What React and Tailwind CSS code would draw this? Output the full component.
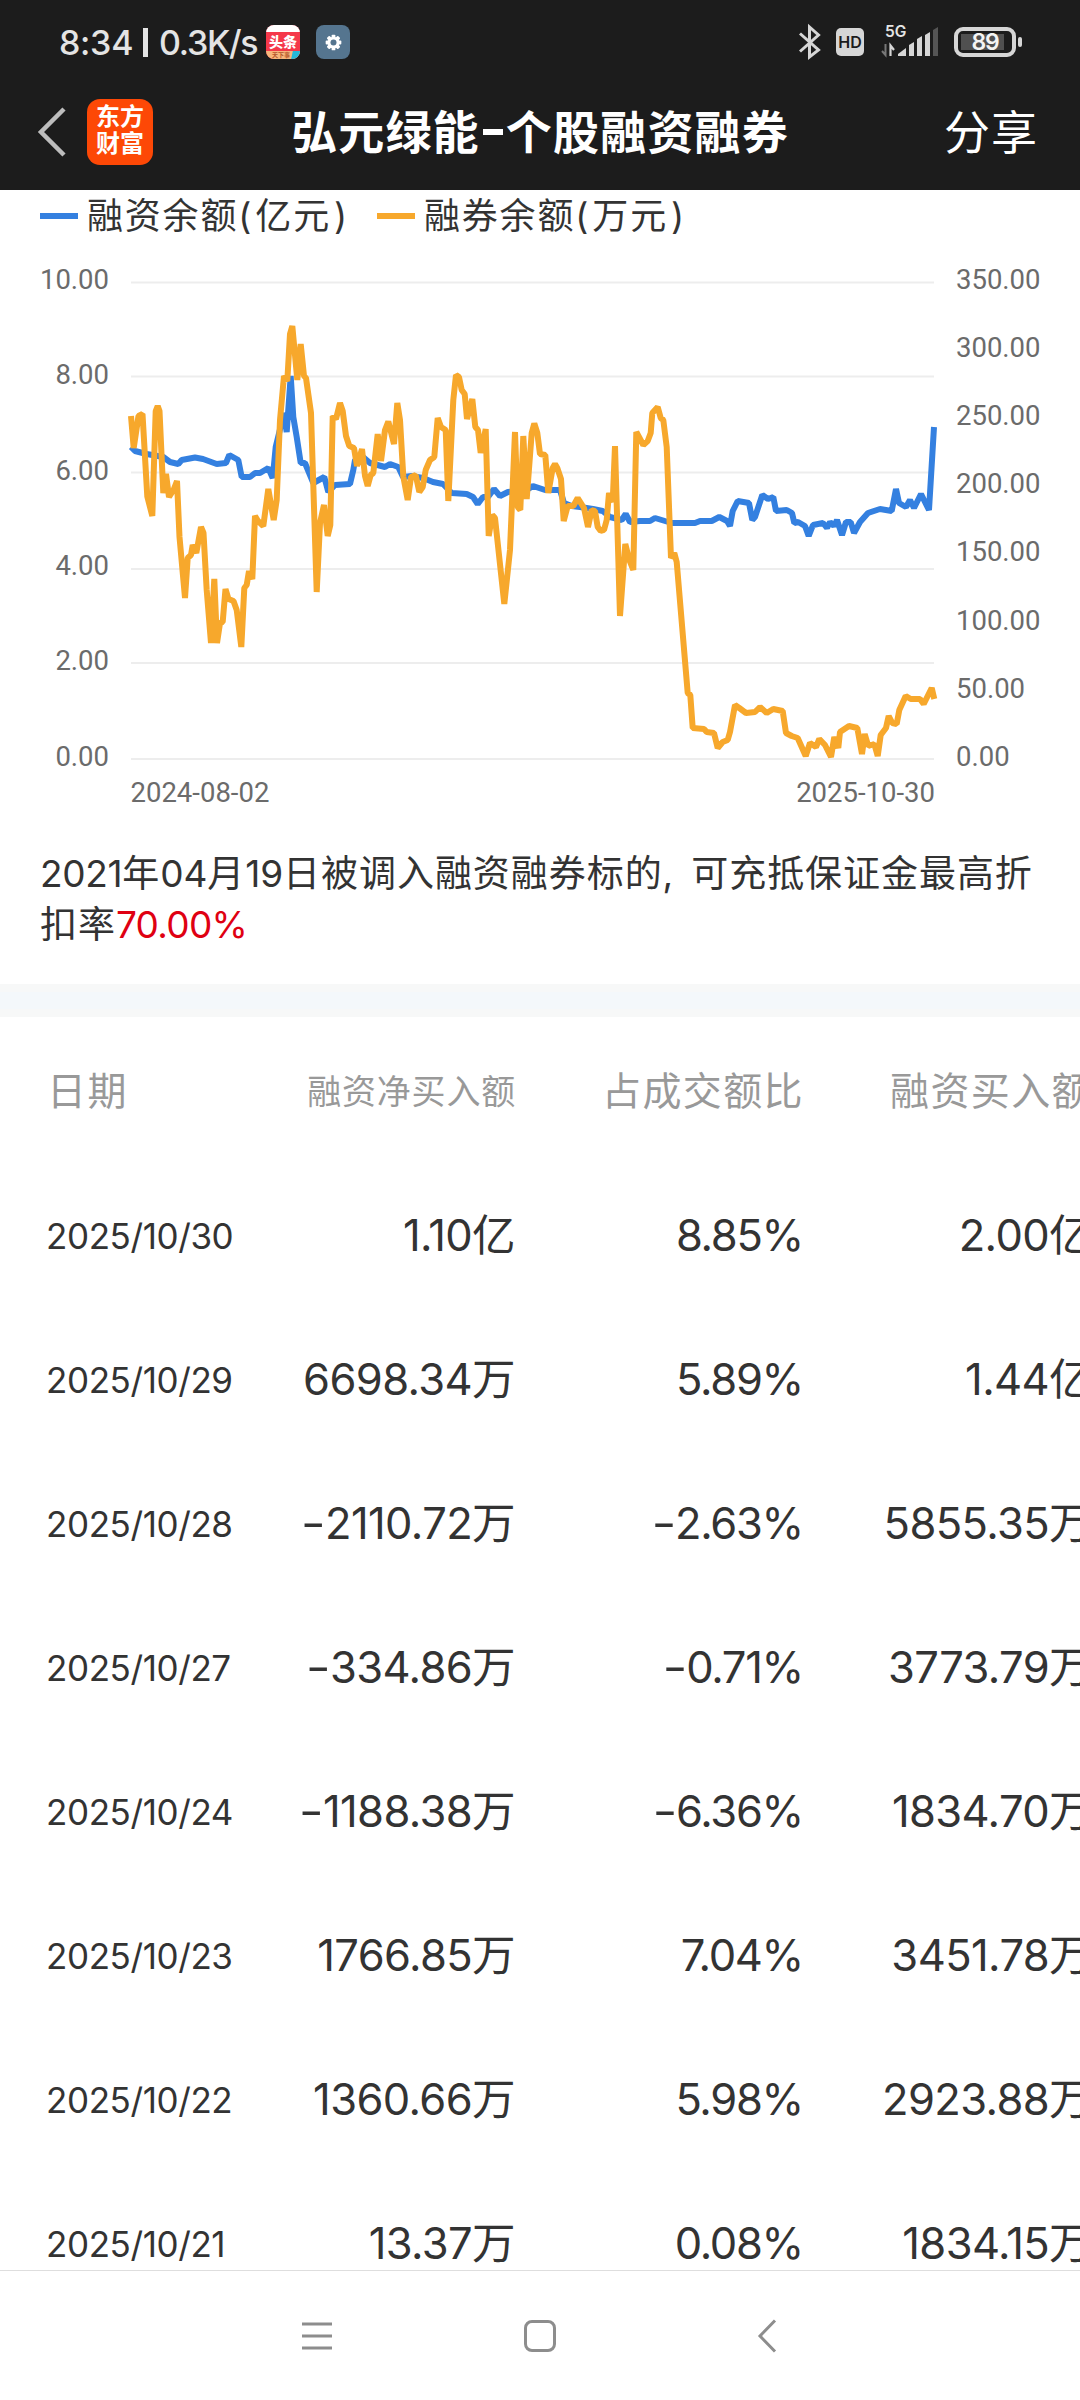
const rows = [
  { date: '2025/10/30', net: '1.10亿', ratio: '8.85%', buy: '2.00亿' },
  { date: '2025/10/29', net: '6698.34万', ratio: '5.89%', buy: '1.44亿' },
  { date: '2025/10/28', net: '-2110.72万', ratio: '-2.63%', buy: '5855.35万' },
  { date: '2025/10/27', net: '-334.86万', ratio: '-0.71%', buy: '3773.79万' },
  { date: '2025/10/24', net: '-1188.38万', ratio: '-6.36%', buy: '1834.70万' },
  { date: '2025/10/23', net: '1766.85万', ratio: '7.04%', buy: '3451.78万' },
  { date: '2025/10/22', net: '1360.66万', ratio: '5.98%', buy: '2923.88万' },
  { date: '2025/10/21', net: '13.37万', ratio: '0.08%', buy: '1834.15万' },
];

const gridLines = [282.5, 376.5, 472.5, 569, 663, 759];
const leftTicks = ['10.00', '8.00', '6.00', '4.00', '2.00', '0.00'];
const rightTicks = ['350.00', '300.00', '250.00', '200.00', '150.00', '100.00', '50.00', '0.00'];

const marginLine = `131,447 135,451 146.7,454 163.3,457 170,462 178.3,464 181.7,460 195,457.5 203,459 216.7,464 226,463
  229.3,455 238.3,460 241.7,477 250,477 255,473 260,473 268.3,468 272.7,478 275.7,447 284,413 286.7,432 290.7,376
  293.3,417 296.7,437 300.7,463 305,463 313.3,483 324.3,477 328.3,492 335,485 350,484 353.3,470 355,460 363,457
  370,463 385,467 390,464 398.3,467 403,477 411.7,476 423,478 433,482 443,484 451.7,493 466.7,494 473,497
  477.7,504 483,497 488,497 494,489 500,496 508,492 526.7,490 533,486 545,490 560,490 564,503 571.7,506 580,507
  593,509 602.7,511 610,517 621.7,520 625.7,514 630,522 640,521 650,521 655,518 665,521 671.7,523 695,523
  700,521 711.7,521 719.3,517 727,521 730,526 732.7,511 737.7,501 749,503 752.3,520 755,517 762.3,495 768,499
  773.3,497 776,511 786.7,510 792,513 794.3,523 798,522 805,526 808.7,536 813,525 823,523 827,528 830,522
  834,526 837,520 842,535 846,522 850.7,522 854,533 860,522 868,513 880,509 891.7,511 896,489 899,503 906,507
  910,500 914,508 921,494 929,510 934,427`;

const shortLine = `131,416 133.7,448 138.5,416 142.5,414 147.3,496.5 152.3,516 155.7,411 157.7,406 159.5,411 163.3,493
  166,474 169,497 173.5,490 177,481 179.5,537 185,598 187.7,558 191,555 192.7,545 196.3,553 201,527 203.5,533
  206.7,590 211,643 214.3,579 217,643 220,623 222.7,622 225.5,589 228.5,599 233.5,601 236.7,610 241.3,647
  244.3,588 246.7,585 249,571 252.3,579 255,516 258,521 263.3,526 268.3,489 273.7,520 276.7,500 280,420 284,376
  287.3,381 290,334 292.3,326 297.3,380 300.7,344 304,376 306,378 311,413 316.7,592 320,523 324,505 327.7,536
  330.3,525 332.7,416 336,419 340,403 342.7,411 346,436 349.3,446 354,448 357,466 362,449 365,476 367.7,486
  370.7,475 373.3,473 377.7,434 381,461 385,430 388.3,421.5 394,444 397.3,403 400,420 403.3,476.5 407.7,500
  411,477 415.7,475 419.3,492 422.7,487 425.7,470 430,460 434.3,457 437.7,418 441,427 445.7,430 448.3,501
  453.3,400 456,375 459,377 461.7,390 464.7,394 467,419 472.3,399 475.3,427 478,430 480.7,453 485.7,429
  488.7,536 492.3,515 495,518 504.3,604 510,550 515,432 517.7,507 520.3,510 523.3,436 526.7,499 531.7,433
  534.3,423.5 537.3,433 540,454 545.3,455 548.3,493 552.7,468 555,464 557.3,468 561,479 563.7,521 567.7,506
  573.3,506 577.7,498 584,508 588,527 591.7,510 595,511 597.7,527 600.7,531 604,530 606.7,520 609,493 612.7,502
  615,446 620,616 625.3,544 629.3,560 633.3,570 636.3,432 643.3,445 647.7,441 650.7,433 652.3,413 657.7,407
  660.7,418 663.3,420 666.7,447 671,558 674.3,553 676.7,562 687.7,693 690.3,695 692.7,728 704,729 706.7,732
  714,733 717.7,748 722.7,742 727.7,740 730,732 735,705 739.3,708 746,713 755,712 760,707 766.7,713 773.3,709
  782.7,711 786,733 791.7,736 797.7,738 805.7,756 810,743 816,747 819.3,739 825,745 831,757 834.3,737 838.3,748
  840,732 849,726 857.3,728 862,754 864.7,734 868.3,746 874.3,744 877.7,756 880.7,735 886,728 888.7,716
  892.3,723 896.7,724 899.3,710 905.7,696 910.7,699 920,699 923.7,704 931.7,688 934.3,699`;

function StatusBar() {
  return (
    <div className="flex h-[84px] items-center pl-[59px] pr-[58px] text-[#e4e4e4]">
      <div className="flex items-center text-[34px] font-medium">
        <span className="w-[74px] whitespace-nowrap tracking-[-0.3px]">8:34</span>
        <span className="ml-[10px] h-[29px] w-[5px] bg-[#e4e4e4]" />
        <span className="ml-[11px] w-[99px] whitespace-nowrap tracking-[-1.3px]">0.3K/s</span>
      </div>
      <div className="ml-[8px] flex h-[34px] w-[34px] flex-col overflow-hidden rounded-[8px] bg-[#f5384a]">
        <div className="h-[7px] shrink-0 bg-white" />
        <div className="flex h-[19px] shrink-0 items-center justify-center whitespace-nowrap text-[14px] leading-none font-black text-white">头条</div>
        <div className="flex h-[8px] shrink-0 bg-[#f7b67c]">
          <span className="w-[26px] whitespace-nowrap pl-[6px] text-[6px] leading-[8px] font-bold text-[#b4552a]">天下事</span>
          <span className="flex-1 -skew-x-12 bg-[#25b8d8]" />
        </div>
      </div>
      <div className="ml-[16px] flex h-[34px] w-[34px] items-center justify-center rounded-[8px] bg-[#55758f]">
        <svg width="17" height="17" viewBox="-9 -9 18 18">
          <g fill="#fff">
            {[0, 45, 90, 135].map(a => (
              <rect key={a} x="-2" y="-8.3" width="4" height="16.6" rx="1" transform={`rotate(${a})`} />
            ))}
            <circle r="6.2" />
          </g>
          <circle r="3.2" fill="#55758f" />
        </svg>
      </div>

      <svg className="ml-auto" width="224" height="48" viewBox="798 18 224 48">
        <path d="M800 33.5 L818.5 50 L809.5 57 V27 L818.5 35 L800 51.5" fill="none" stroke="#d6d6d6" strokeWidth="3" />
        <rect x="836" y="28" width="28" height="28" rx="5" fill="#d6d6d6" />
        <text x="850" y="48.3" fontSize="16" fontWeight="600" textAnchor="middle" fill="#1c1c1c">HD</text>
        <text x="885" y="36.8" fontSize="15.5" fontWeight="600" fill="#e4e4e4">5G</text>
        <path d="M882 51 L885.5 55 V44" stroke="#777" strokeWidth="2" fill="none" />
        <path d="M890.5 56 V45.5 L894 50" stroke="#d6d6d6" strokeWidth="2.2" fill="none" />
        <g fill="#d6d6d6">
          <path d="M898 56 V54 L906 48 V56 Z" />
          <path d="M909 56 V45 L914 42 V56 Z" />
          <path d="M917 56 V39 L922 36 V56 Z" />
          <path d="M925 56 V35 L930 32 V56 Z" />
        </g>
        <path d="M933 56 V30 L938 27 V56 Z" fill="#555" />
        <rect x="956" y="29" width="58" height="26" rx="7" fill="none" stroke="#d6d6d6" strokeWidth="4" />
        <rect x="961" y="34" width="43" height="16" fill="#505050" />
        <text x="985" y="50.3" fontSize="23" fontWeight="600" textAnchor="middle" fill="#f4f4f4" letterSpacing="-1.2">89</text>
        <rect x="1018" y="37" width="4" height="10" rx="2" fill="#d6d6d6" />
      </svg>
    </div>
  );
}

function TitleBar() {
  return (
    <div className="grid h-[106px] grid-cols-[291px_498px_1fr] items-center pb-[11px] text-white">
      <div className="flex items-center pl-[37px]">
        <svg width="29" height="50" viewBox="0 0 29 50">
          <path d="M27 2 L4 25 L27 48" fill="none" stroke="#bdbdbd" strokeWidth="4.5" />
        </svg>
        <div className="ml-[21px] flex h-[66px] w-[66px] flex-col items-center justify-center rounded-[13px] bg-[#fd4806] pb-[3px] text-[24px] leading-[27px] font-bold">
          <span>东方</span>
          <span>财富</span>
        </div>
      </div>
      <h1 className="flex items-center whitespace-nowrap text-[46px] leading-[60px] font-bold tracking-[1.2px]">
        弘元绿能
        <span className="mx-[3px] h-[6px] w-[21px] bg-white" />
        个股融资融券
      </h1>
      <span className="pl-[155px] text-[46px] leading-[60px] tracking-[1px]">分享</span>
    </div>
  );
}

function Legend() {
  return (
    <div className="flex h-[60px] items-center pb-[8px] pl-[40px] text-[36px] text-[#333]">
      <span className="h-[6px] w-[38px] bg-[#3480e0]" />
      <span className="ml-[9px] w-[290px] whitespace-nowrap tracking-[1.8px]">
        融资余额<span className="tracking-[4px]">(</span>亿元<span className="pl-[3px]">)</span>
      </span>
      <span className="h-[6px] w-[38px] bg-[#f7a82c]" />
      <span className="ml-[9px] whitespace-nowrap tracking-[1.8px]">
        融券余额<span className="tracking-[4px]">(</span>万元<span className="pl-[3px]">)</span>
      </span>
    </div>
  );
}

function Chart() {
  return (
    <svg className="block" width="1080" height="580" viewBox="0 250 1080 580">
      {gridLines.map(y => (
        <line key={y} x1="131" x2="934" y1={y} y2={y} stroke="#ededed" strokeWidth="2" />
      ))}
      <g fill="#6b6b6b" fontFamily="Roboto, sans-serif" fontSize="27.5">
        {leftTicks.map((t, i) => (
          <text key={t} x="109" y={289 + i * 95.3} textAnchor="end">{t}</text>
        ))}
        {rightTicks.map((t, i) => (
          <text key={t} x="956" y={289 + i * 68.1}>{t}</text>
        ))}
        <text x="130.5" y="801.5">2024-08-02</text>
        <text x="935" y="801.5" textAnchor="end">2025-10-30</text>
      </g>
      <polyline points={marginLine} fill="none" stroke="#3480e0" strokeWidth="6" strokeLinejoin="bevel" />
      <polyline points={shortLine} fill="none" stroke="#f7a82c" strokeWidth="6" strokeLinejoin="bevel" />
    </svg>
  );
}

function Notice() {
  return (
    <div className="h-[154px] whitespace-nowrap pl-[40px] pt-[18px] text-[37px] leading-[51px] tracking-[0.95px] text-[#333]">
      <p>
        <span className="tracking-[-0.3px]">2021</span>年<span className="tracking-[-0.1px]">04</span>月
        <span className="tracking-[-0.1px]">19</span>日被调入融资融券标的<span className="tracking-[-8px]">,</span>
        <span className="pl-[26px]">可充抵保证金最高折</span>
      </p>
      <p>扣率<span className="tracking-[-0.7px] text-[#df0012]">70.00%</span></p>
    </div>
  );
}

// the minus sign sits in a fixed slot so negative values keep the same gap
function Amount({ value, className }) {
  const negative = value.startsWith('-');
  return (
    <span className={className}>
      {negative && <span className="inline-block w-[25px] origin-right scale-x-125 text-right">-</span>}
      {negative ? value.slice(1) : value}
    </span>
  );
}

function Table() {
  return (
    <div className="w-[1092px]">
      <div className="grid h-[146px] grid-cols-[200px_316px_288px_288px] items-center pt-[3px] text-right text-[39px] tracking-[1.4px] whitespace-nowrap text-[#999]">
        <span className="pl-[47px] text-left">日期</span>
        <span className="text-[34px] tracking-[0.8px]">融资净买入额</span>
        <span>占成交额比</span>
        <span>融资买入额</span>
      </div>
      {rows.map(row => (
        <div
          key={row.date}
          className="grid h-[144px] grid-cols-[200px_315px_288px_289px] items-center pt-[2px] text-right text-[43.5px] whitespace-nowrap text-[#333]"
        >
          <span className="pl-[46px] text-left text-[35px] tracking-[-0.4px]">{row.date}</span>
          <Amount value={row.net} className="tracking-[-0.6px]" />
          <Amount value={row.ratio} className="tracking-[-1.3px]" />
          <Amount value={row.buy} className="tracking-[-0.6px]" />
        </div>
      ))}
    </div>
  );
}

function NavBar() {
  return (
    <div className="flex h-[130px] shrink-0 items-center border-t border-[#dedede] bg-white pl-[301px]">
      <svg width="32" height="34" viewBox="0 0 32 34" fill="none" stroke="#8d8d8d" strokeWidth="3">
        <path d="M1 5 H31 M1 17 H31 M1 29 H31" />
      </svg>
      <svg className="ml-[190px]" width="34" height="34" viewBox="0 0 34 34" fill="none" stroke="#8d8d8d" strokeWidth="3">
        <rect x="2.5" y="2.5" width="29" height="29" rx="6.5" />
      </svg>
      <svg className="ml-[200px]" width="20" height="34" viewBox="0 0 20 34" fill="none" stroke="#8d8d8d" strokeWidth="3">
        <path d="M18 1.5 L3 17 L18 32.5" />
      </svg>
    </div>
  );
}

export default function App() {
  return (
    <div className="flex h-[2400px] w-[1080px] flex-col overflow-hidden bg-white font-['Inter','Noto_Sans_CJK_SC',sans-serif]">
      <header className="h-[190px] shrink-0 bg-[#1c1c1c]">
        <StatusBar />
        <TitleBar />
      </header>
      <main className="min-h-0 flex-1 overflow-hidden">
        <Legend />
        <Chart />
        <Notice />
        <div className="h-[33px] border-y-8 border-[#f7f8f8] bg-[#f4f8fb]" />
        <Table />
      </main>
      <NavBar />
    </div>
  );
}
